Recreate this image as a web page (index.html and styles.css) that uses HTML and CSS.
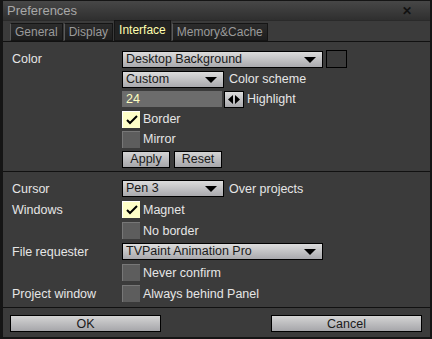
FILE: index.html
```html
<!DOCTYPE html>
<html lang="en">
<head>
  <meta charset="UTF-8" />
  <title>Preferences</title>
  <link rel="stylesheet" href="styles.css">
</head>
<body>
  <div class="window">
    <div class="titlebar">
      <span class="title">Preferences</span>
      <span class="close">&#x2715;</span>
    </div>
    <div class="tabs">
      <div class="tab">General</div>
      <div class="tab">Display</div>
      <div class="tab active">Interface</div>
      <div class="tab">Memory&amp;Cache</div>
    </div>

    <div class="section first">
      <div class="row">
        <div class="label">Color</div>
        <div class="select wide">Desktop Background<span class="arrow"></span></div>
        <div class="swatch"></div>
      </div>
      <div class="row">
        <div class="label"></div>
        <div class="select">Custom<span class="arrow"></span></div>
        <span class="text gap5">Color scheme</span>
      </div>
      <div class="row">
        <div class="label"></div>
        <div class="field">24</div>
        <div class="spin">
          <svg width="12" height="9" viewBox="0 0 12 9"><path d="M0 4.5 L5 0 L5 9 Z M12 4.5 L7 0 L7 9 Z" fill="#000"/></svg>
        </div>
        <span class="text">Highlight</span>
      </div>
      <div class="row">
        <div class="label"></div>
        <div class="check on">
          <svg width="12" height="10" viewBox="0 0 12 10"><path d="M1 5 L4 8 L11 1" stroke="#000" stroke-width="2" fill="none"/></svg>
        </div>
        <span class="text">Border</span>
      </div>
      <div class="row">
        <div class="label"></div>
        <div class="check"></div>
        <span class="text">Mirror</span>
      </div>
      <div class="row">
        <div class="label"></div>
        <button class="btn small">Apply</button>
        <button class="btn small">Reset</button>
      </div>
    </div>

    <div class="section second">
      <div class="row">
        <div class="label">Cursor</div>
        <div class="select">Pen 3<span class="arrow"></span></div>
        <span class="text gap5">Over projects</span>
      </div>
      <div class="row">
        <div class="label">Windows</div>
        <div class="check on">
          <svg width="12" height="10" viewBox="0 0 12 10"><path d="M1 5 L4 8 L11 1" stroke="#000" stroke-width="2" fill="none"/></svg>
        </div>
        <span class="text">Magnet</span>
      </div>
      <div class="row">
        <div class="label"></div>
        <div class="check"></div>
        <span class="text">No border</span>
      </div>
      <div class="row">
        <div class="label">File requester</div>
        <div class="select wide">TVPaint Animation Pro<span class="arrow"></span></div>
      </div>
      <div class="row">
        <div class="label"></div>
        <div class="check"></div>
        <span class="text">Never confirm</span>
      </div>
      <div class="row">
        <div class="label">Project window</div>
        <div class="check"></div>
        <span class="text">Always behind Panel</span>
      </div>
    </div>

    <div class="footer">
      <button class="btn big">OK</button>
      <button class="btn big">Cancel</button>
    </div>
  </div>
</body>
</html>
```

FILE: styles.css
```css
body {
  margin: 0;
  background: #1a1a1a;
  font-family: "Liberation Sans", Arial, sans-serif;
  font-size: 12.5px;
  color: #e6e6e6;
}

.window {
  width: 432px;
  height: 339px;
  box-sizing: border-box;
  background: #3b3b3b;
  border: 1px solid #151515;
  border-left-width: 3px;
  border-right-width: 2px;
  border-bottom-width: 2px;
}

.titlebar {
  height: 19px;
  display: flex;
  align-items: center;
  justify-content: space-between;
  padding: 0 18px 0 4px;
  background: linear-gradient(to bottom, #474747, #2f2f2f);
  border-bottom: 1px solid #2a2a2a;
}

.title {
  font-size: 13px;
  color: #a8a8a8;
}

.close {
  font-size: 12px;
  color: #111;
  font-weight: bold;
}

.tabs {
  display: flex;
  align-items: flex-end;
  height: 20px;
  padding-left: 7px;
  border-bottom: 1px solid #111;
}

.tab {
  height: 16px;
  line-height: 16px;
  padding: 0 4px;
  background: linear-gradient(to bottom, #2c2c2c, #1e1e1e);
  border: 1px solid #151515;
  border-left-color: #5a5a5a;
  color: #9a9a9a;
  font-size: 12px;
  margin-right: 1px;
}

.tab.active {
  height: 19px;
  line-height: 18px;
  background: #222;
  color: #ffffb0;
  border-left-color: #151515;
}

.section {
  padding-left: 9px;
}

.section.first {
  padding-top: 7px;
  padding-bottom: 2px;
  border-bottom: 1px solid #111;
}

.section.second {
  padding-top: 6px;
  padding-bottom: 3px;
  border-bottom: 1px solid #111;
}

.row {
  display: flex;
  align-items: center;
  height: 20px;
}

.second .row {
  height: 21px;
}

.label {
  width: 110px;
  flex: none;
}

.select {
  position: relative;
  width: 97px;
  height: 15px;
  line-height: 15px;
  padding-left: 3px;
  box-sizing: content-box;
  border: 1px solid #000;
  background: linear-gradient(to bottom, #dcdcdc, #a9a9ad);
  color: #1a1a1a;
}

.select.wide {
  width: 196px;
}

.arrow {
  position: absolute;
  right: 6px;
  top: 5px;
  border-left: 6px solid transparent;
  border-right: 6px solid transparent;
  border-top: 6px solid #000;
}

.swatch {
  width: 19px;
  height: 16px;
  margin-left: 3px;
  border: 1px solid #000;
  background: #3b3b3b;
}

.text {
  margin-left: 3px;
}

.text.gap5 {
  margin-left: 5px;
}

.field {
  width: 96px;
  height: 16px;
  line-height: 16px;
  padding-left: 4px;
  background: #6c6c6c;
  color: #ffffc0;
}

.spin {
  width: 18px;
  height: 15px;
  margin-left: 2px;
  display: flex;
  align-items: center;
  justify-content: center;
  border: 1px solid #000;
  background: linear-gradient(to bottom, #dcdcdc, #a9a9ad);
}

.check {
  width: 18px;
  height: 17px;
  display: flex;
  align-items: center;
  justify-content: center;
  background: #5d5d5d;
  border-top: 1px solid #777;
  border-left: 1px solid #777;
  box-sizing: border-box;
}

.check.on {
  background: #ffffc8;
  border-color: #fff;
}

.btn {
  font-family: "Liberation Sans", Arial, sans-serif;
  font-size: 12.5px;
  color: #1a1a1a;
  border: 1px solid #000;
  background: linear-gradient(to bottom, #d4d4d4, #a6a6aa);
  padding: 0;
  height: 17px;
  line-height: 14px;
}

.btn.small {
  width: 48px;
  margin-right: 4px;
}

.footer {
  display: flex;
  justify-content: space-between;
  padding: 7px 8px 0 7px;
}

.btn.big {
  width: 151px;
}
```
